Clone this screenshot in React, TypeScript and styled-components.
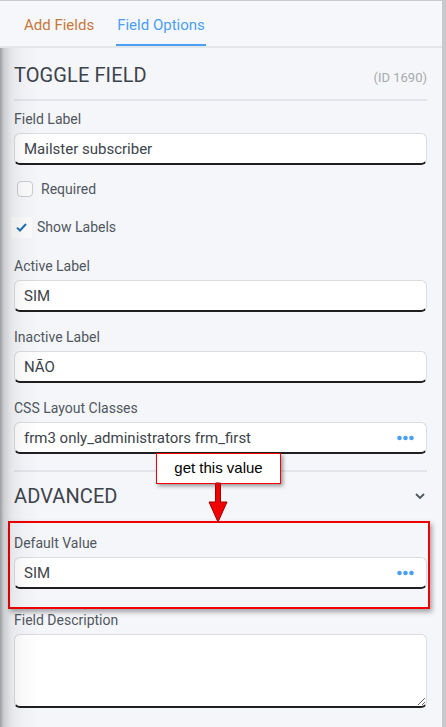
import React from "react";
import styled, { createGlobalStyle } from "styled-components";

const GlobalStyle = createGlobalStyle`
  html, body { margin: 0; padding: 0; background: #f5f6fa; }
  body { font-family: Roboto, "Noto Sans", Arial, sans-serif; }
  * { box-sizing: border-box; }
`;

const Frame = styled.div`
  position: relative;
  width: 446px;
  height: 727px;
  overflow: hidden;
  display: flex;
  background: #f5f6fa;
  border-top: 1px solid #c9cacd;
`;

const Main = styled.div`
  flex: 1;
  display: flex;
  flex-direction: column;
  min-width: 0;
`;

const Scrollbar = styled.div`
  width: 4px;
  background: #c8c9cd;
`;

const LeftShade = styled.div`
  position: absolute;
  left: 0;
  top: 47px;
  bottom: 0;
  width: 40px;
  pointer-events: none;
  background: linear-gradient(
    to right,
    rgba(0, 0, 0, 0.36) 0,
    rgba(0, 0, 0, 0.16) 4px,
    rgba(0, 0, 0, 0.06) 12px,
    rgba(0, 0, 0, 0.02) 24px,
    rgba(0, 0, 0, 0) 40px
  );
`;

const TabBar = styled.div`
  display: flex;
  gap: 21px;
  padding-left: 23px;
  height: 47px;
  background: #f6f7fb;
  border-bottom: 2px solid #e3e7ea;
`;

const Tab = styled.div<{ $active?: boolean }>`
  padding: 4px 1px 0;
  height: 45px;
  display: flex;
  align-items: center;
  font-size: 15px;
  color: ${(p) => (p.$active ? "#4a9ff5" : "#c8773a")};
  border-bottom: 2px solid ${(p) => (p.$active ? "#4a9ff5" : "transparent")};
`;

const Body = styled.div`
  padding: 0 15px 0 14px;
  display: flex;
  flex-direction: column;
`;

const HeadRow = styled.div`
  display: flex;
  justify-content: space-between;
  align-items: baseline;
  padding: 15px 0 12px;
  border-bottom: 2px solid #e2e6ea;
`;

const SectionTitle = styled.div`
  font-size: 20px;
  line-height: 24px;
  color: #3c434a;
  letter-spacing: 0.1px;
`;

const IdTag = styled.span`
  font-size: 13px;
  color: #a7aaad;
`;

const Group = styled.div<{ $mt: number }>`
  margin-top: ${(p) => p.$mt}px;
  display: flex;
  flex-direction: column;
`;

const Label = styled.label`
  font-size: 14px;
  line-height: 20px;
  color: #50575e;
`;

const InputWrap = styled.div`
  margin-top: 4px;
  height: 32px;
  display: flex;
  align-items: center;
  background: #fff;
  border: 1px solid #dcdcde;
  border-bottom: 2px solid #1f1f1f;
  border-radius: 6px;
  padding: 0 12px 0 9px;
`;

const TextInput = styled.input`
  flex: 1;
  min-width: 0;
  border: none;
  outline: none;
  background: transparent;
  padding: 0;
  font-family: Roboto, "Noto Sans", Arial, sans-serif;
  font-size: 15px;
  color: #3c434a;
`;

const TextArea = styled.textarea`
  margin-top: 4px;
  height: 74px;
  width: 100%;
  resize: vertical;
  background: #fff;
  border: 1px solid #dcdcde;
  border-bottom: 2px solid #1f1f1f;
  border-radius: 6px;
  outline: none;
  font-family: Roboto, "Noto Sans", Arial, sans-serif;
  font-size: 15px;
  display: block;
`;

const CheckRow = styled.div<{ $mt: number }>`
  margin-top: ${(p) => p.$mt}px;
  height: 22px;
  display: flex;
  align-items: center;
  font-size: 14px;
  color: #50575e;
`;

const EmptyBox = styled.span`
  width: 16px;
  height: 16px;
  margin-left: 3px;
  margin-right: 8px;
  border: 1px solid #c9ccd0;
  border-radius: 4px;
  background: #fbfbfc;
`;

const CheckedBox = styled.span`
  width: 21px;
  height: 21px;
  margin-left: -3px;
  margin-right: 5px;
  display: flex;
  align-items: center;
  justify-content: center;
  background: #fbfbfc;
`;

const Divider = styled.div`
  margin-top: 16px;
  height: 2px;
  background: #e2e6ea;
`;

const AdvancedRow = styled.div`
  margin-top: 12px;
  display: flex;
  align-items: center;
  justify-content: space-between;
  padding-right: 2px;
`;

const Highlight = styled.div`
  margin: 13px -3px 0 -6px;
  border: 2px solid #f00000;
  box-shadow: 2px 3px 5px rgba(0, 0, 0, 0.35);
  padding: 10px 1px 18px 4px;
  display: flex;
  flex-direction: column;
`;

const Callout = styled.div`
  position: absolute;
  left: 156px;
  top: 452px;
  width: 125px;
  height: 31px;
  background: #fff;
  border: 1px solid #f00000;
  box-shadow: 2px 2px 4px rgba(0, 0, 0, 0.4);
  display: flex;
  align-items: center;
  justify-content: center;
  font-family: "Liberation Sans", Arial, sans-serif;
  font-size: 15px;
  color: #000;
  padding-bottom: 2px;
`;

const ArrowSvg = styled.svg`
  position: absolute;
  left: 206px;
  top: 482px;
  overflow: visible;
`;

const Dots = () => (
  <svg width="17" height="6" viewBox="0 0 17 6">
    <circle cx="2.5" cy="3" r="2.3" fill="#4a9ff5" />
    <circle cx="8.5" cy="3" r="2.3" fill="#4a9ff5" />
    <circle cx="14.5" cy="3" r="2.3" fill="#4a9ff5" />
  </svg>
);

const Field = ({
  label,
  value,
  mt,
  dots,
}: {
  label: string;
  value: string;
  mt: number;
  dots?: boolean;
}) => (
  <Group $mt={mt}>
    <Label>{label}</Label>
    <InputWrap>
      <TextInput defaultValue={value} readOnly />
      {dots && <Dots />}
    </InputWrap>
  </Group>
);

export default function App() {
  return (
    <>
      <GlobalStyle />
      <Frame>
        <Main>
          <TabBar>
            <Tab>Add Fields</Tab>
            <Tab $active>Field Options</Tab>
          </TabBar>
          <Body>
            <HeadRow>
              <SectionTitle>TOGGLE FIELD</SectionTitle>
              <IdTag>(ID 1690)</IdTag>
            </HeadRow>
            <Field label="Field Label" value="Mailster subscriber" mt={8} />
            <CheckRow $mt={13}>
              <EmptyBox />
              Required
            </CheckRow>
            <CheckRow $mt={16}>
              <CheckedBox>
                <svg width="11" height="9" viewBox="0 0 11 9">
                  <path
                    d="M1 4.6 L4 7.5 L10 1"
                    fill="none"
                    stroke="#2271b1"
                    strokeWidth="2"
                  />
                </svg>
              </CheckedBox>
              Show Labels
            </CheckRow>
            <Field label="Active Label" value="SIM" mt={18} />
            <Field label="Inactive Label" value="NÃO" mt={15} />
            <Field
              label="CSS Layout Classes"
              value="frm3 only_administrators frm_first"
              mt={15}
              dots
            />
            <Divider />
            <AdvancedRow>
              <SectionTitle>ADVANCED</SectionTitle>
              <svg width="10" height="6" viewBox="0 0 10 6">
                <path
                  d="M1 1 L5 5 L9 1"
                  fill="none"
                  stroke="#50575e"
                  strokeWidth="1.8"
                />
              </svg>
            </AdvancedRow>
            <Highlight>
              <Label>Default Value</Label>
              <InputWrap>
                <TextInput defaultValue="SIM" readOnly />
                <Dots />
              </InputWrap>
            </Highlight>
            <Group $mt={1}>
              <Label>Field Description</Label>
              <TextArea />
            </Group>
          </Body>
        </Main>
        <Scrollbar />
        <LeftShade />
        <Callout>get this value</Callout>
        <ArrowSvg width="24" height="40" viewBox="0 0 24 40">
          <path
            d="M9.5 0 L14.5 0 L14.5 19 L21 19 L12 39 L3 19 L9.5 19 Z"
            fill="#f00000"
            stroke="#a00000"
            strokeWidth="1"
          />
        </ArrowSvg>
      </Frame>
    </>
  );
}
